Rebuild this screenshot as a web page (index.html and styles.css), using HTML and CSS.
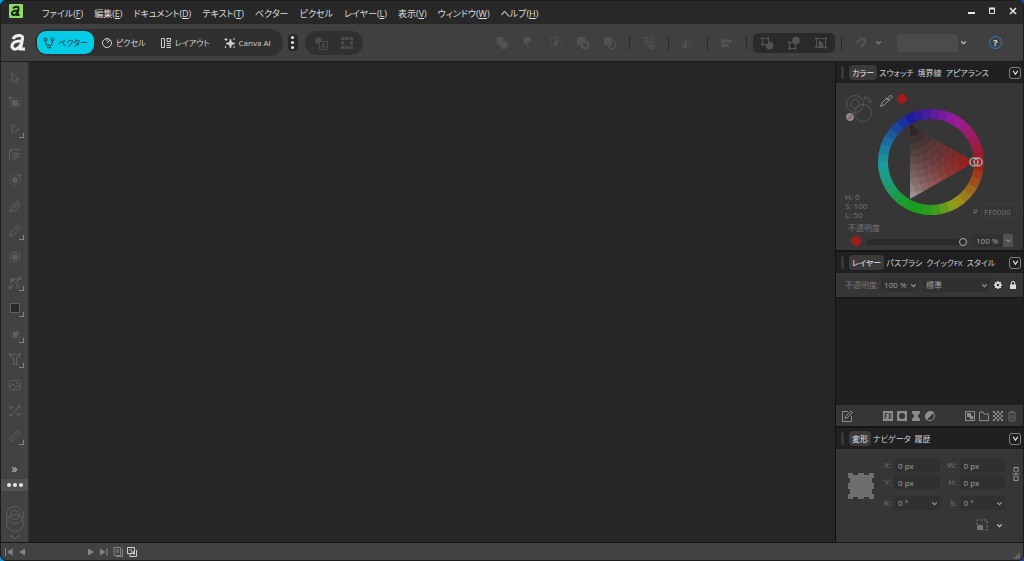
FILE: index.html
```html
<!DOCTYPE html>
<html lang="ja">
<head>
    <meta charset="UTF-8">
    <meta name="viewport" content="width=device-width, initial-scale=1.0">
    <title>Affinity</title>
    <link rel="stylesheet" href="styles.css">
    <script defer src="script.js"></script>
</head>
<body>
<div class="window">
    <header class="titlebar">
        <svg class="app-icon" viewBox="0 0 14 14"><rect width="14" height="14" rx="1" fill="#8fd968"/><path d="M4 4.500C6 2 10.500 2 9.500 5L8.300 11H10.500M9 6.500C4 6.500 2.500 8 3 10C4 12 7 11 8.600 8" fill="none" stroke="#18240f" stroke-width="2"/></svg>
        <nav class="menu">
            <button>ファイル(<u>F</u>)</button>
            <button>編集(<u>E</u>)</button>
            <button>ドキュメント(<u>D</u>)</button>
            <button>テキスト(<u>T</u>)</button>
            <button>ベクター</button>
            <button>ピクセル</button>
            <button>レイヤー(<u>L</u>)</button>
            <button>表示(<u>V</u>)</button>
            <button>ウィンドウ(<u>W</u>)</button>
            <button>ヘルプ(<u>H</u>)</button>
        </nav>
        <div class="window-buttons">
            <button aria-label="最小化"><svg viewBox="0 0 8 8"><path d="M1 6H8" stroke-width="2"/></svg></button>
            <button aria-label="最大化"><svg viewBox="0 0 8 8"><path d="M1 1.500H7" stroke-width="2"/><path d="M1.500 2V6.500H6.500V2"/></svg></button>
            <button aria-label="閉じる"><svg viewBox="0 0 8 8"><path d="M1 1L7 7M7 1L1 7" stroke-width="1.500"/></svg></button>
        </div>
    </header>

    <div class="toolbar">
        <svg class="brand" viewBox="0 0 16 18"><path d="M3 5C5 0.500 14 0 12.500 5L10.500 15H15M12 7C5 6.500 1.500 9 2 13C4 17 9 15 11 10" fill="none" stroke="#eee" stroke-width="3"/></svg>
        <div class="personas">
            <button class="persona persona-active">
                <svg class="icon12" viewBox="0 0 12 12"><circle cx="2.500" cy="2.500" r="1.500"/><circle cx="9.500" cy="2.500" r="1.500"/><circle cx="6" cy="9.500" r="1.500"/><path d="M2.500 4C2.500 7 3.500 8 4.800 8.500M9.500 4C9.500 7 8.500 8 7.200 8.500"/></svg>ベクター</button>
            <button class="persona">
                <svg class="icon12" viewBox="0 0 12 12"><circle cx="6" cy="6" r="4.500"/><path d="M6 6L9 3M6 1.500V4"/></svg>ピクセル</button>
            <button class="persona">
                <svg class="icon12" viewBox="0 0 12 12"><path d="M1.500 1.500H4.500V10.500H1.500ZM7 1.500H10.500V4.500H7ZM6.500 6.500H11M6.500 8.500H11M6.500 10.500H11"/></svg>レイアウト</button>
            <button class="persona">
                <svg class="icon12" viewBox="0 0 12 12"><path d="M6.500 2L7.500 5.500L11 6.500L7.500 7.500L6.500 11L5.500 7.500L2 6.500L5.500 5.500Z" fill="currentColor"/><path d="M2 1V4M0.500 2.500H3.500M10 1V3M1.500 9V11M9 10H11"/></svg>Canva AI</button>
        </div>
        <button class="dots-v" aria-label="その他"><i></i><i></i><i></i></button>
        <div class="quick">
            <button aria-label="テキスト変換"><svg class="icon14" viewBox="0 0 14 14"><circle cx="4.500" cy="4.500" r="3.500" fill="currentColor" stroke="none"/><rect x="5.500" y="5.500" width="8" height="8" fill="#303030"/><path d="M7.500 12L9.500 7L11.500 12M8 10.500H11"/></svg></button>
            <button aria-label="グリッド"><svg class="icon14" viewBox="0 0 14 14"><path d="M1 2.500H13M1 11.500H13" stroke-width="3" stroke-dasharray="3.500 .75"/><path d="M2.700 5.200V8.800M11.300 5.200V8.800" stroke-width="3"/></svg></button>
        </div>
        <div class="ops">
            <div class="booleans">
                <button aria-label="追加"><svg class="icon14" viewBox="0 0 14 14"><path d="M2 1.500H8V5A4 4 0 1 1 5 8H2Z" fill="currentColor"/></svg></button>
                <button aria-label="減算"><svg class="icon14" viewBox="0 0 14 14"><path d="M2 1.500H8V4.500L5 8H2Z" fill="currentColor"/><circle cx="9" cy="9" r="3.800" stroke-dasharray="1.500 1"/></svg></button>
                <button aria-label="交差"><svg class="icon14" viewBox="0 0 14 14"><path d="M5 8A4 4 0 0 1 8 4.500V8Z" fill="currentColor"/><rect x="1.500" y="1.500" width="7" height="7" stroke-dasharray="1.500 1"/><circle cx="9" cy="9" r="3.800" stroke-dasharray="1.500 1"/></svg></button>
                <button aria-label="型抜き"><svg class="icon14" viewBox="0 0 14 14"><path d="M1.500 1.500H8.500V4L4 8.500H1.500Z" fill="currentColor"/><circle cx="9" cy="9" r="3.200" stroke-width="2.500"/></svg></button>
                <button aria-label="分割"><svg class="icon14" viewBox="0 0 14 14"><path d="M1.500 1.500H8.500V4L4 8.500H1.500Z" fill="currentColor"/><circle cx="9" cy="9" r="3.800" stroke-width="1.500"/><path d="M6 8L8 6V10Z" fill="currentColor"/></svg></button>
            </div>
            <span class="sep"></span>
            <button aria-label="ブレンド"><svg class="icon14" viewBox="0 0 14 14"><rect x="1.500" y="1.500" width="4" height="4"/><circle cx="9" cy="3.500" r="2"/><path d="M4 7L7 10M6 6L10 9M10 5L13 8M5 10H8V12"/><rect x="9.500" y="9.500" width="3" height="3"/></svg></button>
            <span class="sep"></span>
            <button aria-label="反転"><svg class="icon14" viewBox="0 0 14 14"><path d="M6 2V12H1Z" fill="currentColor" stroke="none"/><path d="M8.500 3V12H13Z" stroke-dasharray="1.500 1"/></svg></button>
            <span class="sep"></span>
            <button aria-label="整列"><svg class="icon14" viewBox="0 0 14 14"><path d="M2 2V12"/><path d="M2 5H12M2 9.500H9" stroke-width="3"/></svg></button>
            <span class="sep"></span>
            <div class="insert">
                <button aria-label="背面に挿入"><svg class="icon14" viewBox="0 0 14 14"><circle cx="9.500" cy="9.500" r="3.500" fill="currentColor"/><rect x="2.500" y="2.500" width="6" height="6" fill="#292929"/><path d="M1 2.500H3M8 1V3.500M1 8.500H4" stroke-width="2"/></svg></button>
                <button aria-label="前面に挿入"><svg class="icon14" viewBox="0 0 14 14"><rect x="2.500" y="6.500" width="6" height="6"/><circle cx="9" cy="4.500" r="3.500" fill="currentColor"/><path d="M1 6.500H3M1 12.500H4M7 12.500H9.500" stroke-width="2"/></svg></button>
                <button aria-label="内側に挿入"><svg class="icon14" viewBox="0 0 14 14"><rect x="2.500" y="2.500" width="9" height="9"/><path d="M5 10.500V5.500A4 4 0 0 1 9 10.500Z" fill="currentColor"/><path d="M1 2.500H3M11 2.500H13M1 11.500H3M11 11.500H13" stroke-width="2"/></svg></button>
            </div>
            <span class="sep"></span>
            <button class="snap" aria-label="スナップ"><svg class="icon14" viewBox="0 0 14 14"><path d="M2 7L6 3.500C10 1 13 5 10 8L7 11" stroke-width="2.500"/></svg></button>
            <svg class="chev" viewBox="0 0 6 6"><path d="M1 2L3 4L5 2"/></svg>
            <select class="preset" aria-label="プリセット"><option></option></select>
            <svg class="chev chev-light" viewBox="0 0 6 6"><path d="M1 2L3 4L5 2"/></svg>
            <button class="help" aria-label="ヘルプ">?</button>
        </div>
    </div>

    <main class="workspace">
        <aside class="tools">
            <div class="tool-list">
                <button aria-label="移動"><svg viewBox="0 0 14 14"><path d="M4 1.500V11L6.500 9L8 12.500L9.500 11.500L8.500 8.500H11Z"/></svg></button>
                <button aria-label="アートボード"><svg viewBox="0 0 14 14"><rect x="4.500" y="4.500" width="5" height="5" fill="currentColor"/><rect x="2" y="2" width="10" height="10" rx="2" stroke-dasharray="2.500 1.500"/><path d="M0 2H4M2 0V4"/></svg></button>
                <button class="more-tools" aria-label="ノード"><svg viewBox="0 0 14 14"><path d="M4 2V11.500L11 7.500Z"/></svg></button>
                <button aria-label="コーナー"><svg viewBox="0 0 14 14"><path d="M1.500 13V1.500H13M2 2L6 6M6 5V12L8 9.500M6 5L12 6L9 9"/><circle cx="9" cy="8" r="1.500"/></svg></button>
                <button aria-label="輪郭"><svg viewBox="0 0 14 14"><circle cx="7" cy="7" r="5.500" stroke-dasharray="2 1.300"/><circle cx="7" cy="7" r="2.500" fill="currentColor"/><circle cx="12" cy="2.500" r="1" fill="currentColor"/></svg></button>
                <button aria-label="ペン"><svg viewBox="0 0 14 14"><path d="M1.500 12.500L3 6.500L8 4L11 7L8.500 11.500ZM2 12L6.500 8M8 4L9.500 1.500L12.500 4.500L11 7"/><circle cx="7" cy="7.500" r="1"/></svg></button>
                <button class="more-tools" aria-label="鉛筆"><svg viewBox="0 0 14 14"><path d="M1.500 12.500L2.500 9L10 1.500L12.500 4L5 11.500ZM8 3.500L10.500 6M2.500 9L5 11.500"/></svg></button>
                <button aria-label="ナイフ"><svg viewBox="0 0 14 14"><circle cx="7" cy="7" r="2.500" fill="currentColor"/><path d="M1 13L13 1M2 10V5L5 2.500H9M12 4V9L9 11.500H5"/></svg></button>
                <button class="more-tools" aria-label="塗りつぶし"><svg viewBox="0 0 14 14"><path d="M2 12L12 2"/><circle cx="2.500" cy="11.500" r="1.500" fill="currentColor"/><circle cx="11.500" cy="2.500" r="1.500" fill="currentColor"/><circle cx="4" cy="4" r="1.800" fill="currentColor"/><circle cx="8" cy="3" r="1"/><circle cx="10" cy="9" r="1.500"/><path d="M2 7H4M8 12H11"/></svg></button>
                <button class="more-tools" aria-label="長方形"><svg viewBox="0 0 14 14"><rect x="2.500" y="2.500" width="9" height="9" fill="#292929"/></svg></button>
                <button class="more-tools" aria-label="シェイプビルダー"><svg viewBox="0 0 14 14"><path d="M5 5H10V9L8 10H5Z" fill="currentColor"/><circle cx="5.500" cy="5.500" r="4" stroke-dasharray="1.500 2"/><circle cx="9" cy="9" r="4" stroke-dasharray="1.500 2"/></svg></button>
                <button class="more-tools" aria-label="テキスト"><svg viewBox="0 0 14 14"><path d="M2.500 2.500H11.500V5H8.500V11.500H5.500V5H2.500Z"/><path d="M1 2.500H3M11 2.500H13M4.500 12H6.500M8 12H10" stroke-width="2"/></svg></button>
                <button aria-label="画像"><svg viewBox="0 0 14 14"><rect x="1.500" y="2.500" width="11" height="9" rx="1"/><path d="M2 9L5 6L8 9L10 7L12 9"/><circle cx="9" cy="5" r=".6"/></svg></button>
                <button aria-label="切り抜き"><svg viewBox="0 0 14 14"><path d="M2 12L12 2M3 1V6M1 3.500H6M8 10.500H13M11 8V13"/><circle cx="2.500" cy="11.500" r="1"/><circle cx="11.500" cy="2.500" r="1"/></svg></button>
                <button class="more-tools" aria-label="計測"><svg viewBox="0 0 14 14"><path d="M1.500 10L10 1.500L12.500 4L4 12.500ZM4 8L5 9M6 6L7 7M8 4L9 5"/></svg></button>
            </div>
            <button class="expand" aria-label="展開">»</button>
            <button class="dots-h" aria-label="ツールを編集"><i></i><i></i><i></i></button>
            <svg class="fill-stroke" viewBox="0 0 20 36"><circle cx="10" cy="10" r="8.500"/><circle cx="10" cy="10" r="4.500"/><circle cx="10" cy="18" r="8.500"/><path d="M6 31C7 34 13 34 14 31M5 32L6 30L8 32M12 32L14 30L15 32"/></svg>
        </aside>

        <section class="canvas"></section>

        <aside class="panels">
            <section class="panel">
                <div class="tabs">
                    <span class="grip"></span>
                    <button class="tab tab-active">カラー</button><button class="tab">スウォッチ</button><button class="tab">境界線</button><button class="tab">アピアランス</button>
                    <button class="tab-menu" aria-label="パネルメニュー"><svg viewBox="0 0 6 6"><path d="M1 1.500L3 4.500L5 1.500"/></svg></button>
                </div>
                <div class="color-panel">
                    <div class="color-main">
                        <div class="color-side">
                            <div class="color-picks">
                                <svg class="wells" viewBox="0 0 30 30"><circle cx="10" cy="10" r="8.500"/><circle cx="10" cy="10" r="4.500"/><circle cx="18" cy="19" r="8.500"/><path d="M19 4C23 3 25 5 25 9M21 2L19 4L21 6M23 7L25 9L27 7"/><circle cx="5" cy="23" r="4" fill="#8d8787" stroke="none"/><path d="M2.500 25.500L7.500 20.500" stroke="#a83232"/></svg>
                                <svg class="dropper" viewBox="0 0 14 14"><path d="M1.500 12.500L3 9L8 4L10 6L5 11ZM6.500 3.500L10.500 7.500M8.500 5L11 1.500C13 1 13.500 3 12.500 4L10 6.500" /></svg>
                                <span class="red-dot"></span>
                            </div>
                            <div class="hsl">H: 0<br>S: 100<br>L: 50</div>
                        </div>
                        <canvas class="wheel" id="wheel" width="108" height="108"></canvas>
                        <label class="hex"># <input type="text" value="FF0000"></label>
                    </div>
                    <label class="opacity-label" for="opacity">不透明度</label>
                    <div class="opacity-row">
                        <span class="red-dot"></span>
                        <input type="range" id="opacity" min="0" max="100" value="100">
                        <input class="percent" type="text" value="100 %" aria-label="不透明度 %">
                        <button class="drop" aria-label="開く"><svg class="chev" viewBox="0 0 6 6"><path d="M1 2L3 4L5 2"/></svg></button>
                    </div>
                </div>
            </section>

            <section class="panel">
                <div class="tabs">
                    <span class="grip"></span>
                    <button class="tab tab-active">レイヤー</button><button class="tab">パスブラシ</button><button class="tab">クイックFX</button><button class="tab">スタイル</button>
                    <button class="tab-menu" aria-label="パネルメニュー"><svg viewBox="0 0 6 6"><path d="M1 1.500L3 4.500L5 1.500"/></svg></button>
                </div>
                <div class="layer-options">
                    <label for="layer-opacity">不透明度:</label>
                    <select id="layer-opacity" class="select-opacity"><option>100 %</option></select>
                    <select class="select-blend" aria-label="ブレンドモード"><option>標準</option></select>
                    <button aria-label="設定"><svg viewBox="0 0 10 10"><circle cx="5" cy="5" r="2.200" stroke="#ddd" stroke-width="1.800"/><path d="M5 1V2.500M5 7.500V9M1 5H2.500M7.500 5H9M2.200 2.200L3 3M7 7L7.800 7.800M7.800 2.200L7 3M2.200 7.800L3 7" stroke="#ddd" stroke-width="1.500"/></svg></button>
                    <button aria-label="ロック"><svg viewBox="0 0 10 10"><rect x="2" y="4.500" width="6" height="4.500" fill="#ddd" stroke="none"/><path d="M3.300 5V3A1.700 1.700 0 0 1 6.700 3V5" stroke="#ddd"/></svg></button>
                </div>
                <div class="layer-list"></div>
                <div class="layer-actions">
                    <button aria-label="編集"><svg viewBox="0 0 12 12"><path d="M7 1.500H1.500V11.500H10.500V6M4 8.500L5 6L10 1L11.500 2.500L6.500 7.500Z"/></svg></button>
                    <div class="action-group">
                        <button aria-label="エフェクト"><svg viewBox="0 0 12 12"><rect x="1" y="1" width="10" height="10" fill="currentColor" stroke="none"/><path d="M3 9V3.500H5.500M3 6H5M6.500 3L9.500 9M9.500 3L6.500 9" stroke="#353535"/></svg></button>
                        <button aria-label="マスク"><svg viewBox="0 0 12 12"><path d="M1 1H11V11H1ZM6 3A3 3 0 0 0 6 9A3 3 0 0 0 6 3Z" fill="currentColor" fill-rule="evenodd" stroke="none"/></svg></button>
                        <button aria-label="ライブフィルター"><svg viewBox="0 0 12 12"><path d="M2 1H10V3L7.500 6L10 9V11H2V9L4.500 6L2 3Z" fill="currentColor" stroke="none"/></svg></button>
                        <button aria-label="調整"><svg viewBox="0 0 12 12"><circle cx="6" cy="6" r="4.500"/><path d="M9.500 2.500A5 5 0 0 0 2.500 9.500Z" fill="currentColor"/></svg></button>
                    </div>
                    <div class="action-group">
                        <button aria-label="レイヤー"><svg viewBox="0 0 12 12"><rect x="1.500" y="1.500" width="9" height="9"/><rect x="3" y="3" width="4" height="4" fill="currentColor" stroke="none"/><circle cx="7.500" cy="7.500" r="2" fill="currentColor" stroke="none"/></svg></button>
                        <button aria-label="グループ"><svg viewBox="0 0 12 12"><path d="M1.500 10.500V2H5L6 4H10.500V10.500Z"/></svg></button>
                        <button aria-label="ピクセル"><svg viewBox="0 0 12 12"><path d="M1 2H11M1 6H11M1 10H11" stroke-width="2" stroke-dasharray="2 2"/><path d="M3 4H11M3 8H11" stroke-width="2" stroke-dasharray="2 2"/></svg></button>
                        <button class="dim" aria-label="削除"><svg viewBox="0 0 12 12"><path d="M2 3H10M4.500 3V1.500H7.500V3M3 3.500V11H9V3.500M5 5V9.500M7 5V9.500"/></svg></button>
                    </div>
                </div>
            </section>

            <section class="panel panel-last">
                <div class="tabs">
                    <span class="grip"></span>
                    <button class="tab tab-active">変形</button><button class="tab">ナビゲータ</button><button class="tab">履歴</button>
                    <button class="tab-menu" aria-label="パネルメニュー"><svg viewBox="0 0 6 6"><path d="M1 1.500L3 4.500L5 1.500"/></svg></button>
                </div>
                <div class="transform">
                    <svg class="anchor" viewBox="0 0 26 26"><path d="M0 0H5V2H10V0H16V2H21V0H26V5H24V10H26V16H24V21H26V26H21V24H16V26H10V24H5V26H0V21H2V16H0V10H2V5H0Z" fill="#6e6e6e"/></svg>
                    <div class="fields">
                        <label for="fx">X:</label><input id="fx" type="text" value="0 px">
                        <label for="fw">W:</label><input id="fw" type="text" value="0 px">
                        <label for="fy">Y:</label><input id="fy" type="text" value="0 px">
                        <label for="fh">H:</label><input id="fh" type="text" value="0 px">
                        <label class="row-gap" for="fr">R:</label><select class="row-gap" id="fr"><option>0 °</option></select>
                        <label class="row-gap" for="fs">S:</label><select class="row-gap" id="fs"><option>0 °</option></select>
                        <div class="scale">
                            <svg viewBox="0 0 12 12"><path d="M1 6V1H11V11H7" stroke-dasharray="2.500 1.500"/><rect x="1" y="6" width="6" height="5" rx="1" fill="currentColor" stroke="none"/></svg>
                            <svg class="chev chev-light" viewBox="0 0 6 6"><path d="M1 2L3 4L5 2"/></svg>
                        </div>
                    </div>
                    <button class="link" aria-label="縦横比を固定"><svg viewBox="0 0 8 16"><path d="M2 6V1.500H6V6M2 10V14.500H6V10M4 5V7M4 9V11M0.500 8H7.500"/></svg></button>
                </div>
            </section>
        </aside>
    </main>

    <footer class="statusbar">
        <button aria-label="最初"><svg viewBox="0 0 10 10"><path d="M1.500 1V9"/><path d="M8.500 1.500V8.500L3 5Z" fill="currentColor" stroke="none"/></svg></button>
        <button aria-label="前へ"><svg viewBox="0 0 10 10"><path d="M8 1.500V8.500L2 5Z" fill="currentColor" stroke="none"/></svg></button>
        <button class="next" aria-label="次へ"><svg viewBox="0 0 10 10"><path d="M2 1.500V8.500L8 5Z" fill="currentColor" stroke="none"/></svg></button>
        <button aria-label="最後"><svg viewBox="0 0 10 10"><path d="M1 1.500V8.500L6.500 5Z" fill="currentColor" stroke="none"/><path d="M8 1V9"/></svg></button>
        <button class="pages" aria-label="ページ"><svg viewBox="0 0 10 10"><path d="M1 .5H7.500V8.500H1ZM9.500 2V9.500H3M2.500 3H6M2.500 5H6"/></svg></button>
        <button class="pages lit" aria-label="見開き"><svg viewBox="0 0 10 10"><path d="M.5 .5H7.500V6.500H.5ZM9.500 3V9.500H3V7M2.500 3H5M4 5H7V8"/></svg></button>
        <svg class="resize" viewBox="0 0 6 6"><path d="M5 0V6M3 2V6M1 4V6"/></svg>
    </footer>
</div>
</body>
</html>
```
FILE: styles.css
```css
* {
    box-sizing: border-box;
}

html {
    background: linear-gradient(90deg, #0a9fe0, #1c46a8);
}

body {
    margin: 0;
    color: #d0d0d0;
    font-family: "Open Sans", "Noto Sans CJK JP", sans-serif;
    font-size: 8px;
    line-height: 12px;
    font-feature-settings: "palt";
}

button,
input,
select {
    margin: 0;
    padding: 0;
    border: none;
    background: none;
    color: inherit;
    font: inherit;
    font-feature-settings: inherit;
    appearance: none;
}

button {
    display: flex;
    align-items: center;
    justify-content: center;
}

svg {
    display: block;
    flex: none;
    fill: none;
    stroke: currentColor;
}

i {
    display: block;
    border-radius: 50%;
    background: #e4e4e4;
}

.window {
    display: flex;
    flex-direction: column;
    height: 100vh;
    border: 1px solid #1c1c1c;
    border-radius: 6px;
    background: #262626;
    overflow: hidden;
}

/* Title bar */
.titlebar {
    display: flex;
    align-items: center;
    height: 23px;
    padding: 0 6px 0 8px;
    background: #282828;
}

.app-icon {
    width: 14px;
    height: 14px;
    margin-bottom: 4px;
    stroke: none;
}

.menu {
    display: flex;
    gap: 11px;
    margin: 2px 0 0 19px;
    color: #dcdcdc;
    font-size: 9px;
}

.menu button {
    white-space: nowrap;
}

.window-buttons {
    display: flex;
    gap: 13px;
    margin: 0 0 4px auto;
    color: #e8e8e8;
}

.window-buttons svg {
    width: 8px;
    height: 8px;
}

/* Toolbar */
.toolbar {
    display: flex;
    align-items: center;
    height: 37px;
    padding: 0 21px 0 9px;
    background: #404040;
}

.brand {
    width: 16px;
    height: 18px;
}

.personas {
    display: flex;
    align-items: center;
    height: 27px;
    margin-left: 9px;
    padding: 0 5px 0 2px;
    border-radius: 13px;
    background: #303030;
}

.persona {
    gap: 3px;
    height: 23px;
    padding: 0 7px;
    border-radius: 9px;
    white-space: nowrap;
}

.persona-active {
    padding: 0 6px;
    background: #06cbe6;
    color: #12363c;
}

.icon12 {
    width: 12px;
    height: 12px;
}

.icon14 {
    width: 14px;
    height: 14px;
}

.dots-v {
    flex-direction: column;
    gap: 2px;
    width: 10px;
    height: 17px;
    margin-left: 5px;
    border-radius: 4px;
    background: #282828;
}

.dots-v i {
    width: 3px;
    height: 3px;
}

.quick {
    display: flex;
    align-items: center;
    gap: 12px;
    height: 24px;
    margin-left: 7px;
    padding: 0 9px;
    border-radius: 12px;
    background: #303030;
    color: #4b4b4b;
}

.ops {
    display: flex;
    align-items: center;
    gap: 12px;
    margin-left: auto;
    color: #525252;
}

.booleans {
    display: flex;
    gap: 13px;
}

.sep {
    width: 1px;
    height: 14px;
    background: #292929;
}

.insert {
    display: flex;
    align-items: center;
    gap: 13px;
    height: 20px;
    margin: 0 -6px;
    padding: 0 7px;
    border-radius: 5px;
    background: #2a2a2a;
}

.chev {
    width: 7px;
    height: 7px;
    color: #858585;
}

.chev-light {
    color: #ccc;
}

.snap {
    margin-right: -5px;
}

.preset {
    width: 61px;
    height: 18px;
    margin: 0 -10px 0 3px;
    border-radius: 3px;
}

.help {
    width: 13px;
    height: 13px;
    margin-left: 10px;
    border: 1px solid #287fc9;
    border-radius: 50%;
    color: #e0e0e0;
    font-size: 9px;
    font-weight: bold;
}

/* Workspace */
.workspace {
    display: flex;
    flex: 1;
    min-height: 0;
    border-top: 1px solid #1d1d1d;
    border-bottom: 1px solid #171717;
}

.tools {
    display: flex;
    flex-direction: column;
    width: 28px;
    padding-top: 3px;
    border-right: 1px solid #303030;
    background: #424242;
    color: #5d5d5d;
}

.tool-list {
    display: flex;
    flex: 1;
    flex-direction: column;
}

.tool-list button {
    position: relative;
    flex: 1;
}

.tool-list svg {
    width: 14px;
    height: 14px;
}

.more-tools::after {
    content: "";
    position: absolute;
    right: 4px;
    bottom: 4px;
    width: 4px;
    height: 4px;
    border-right: 1px solid #858585;
    border-bottom: 1px solid #858585;
}

.expand {
    height: 20px;
    margin-top: 10px;
    color: #d0d0d0;
    font-size: 12px;
}

.dots-h {
    gap: 2px;
    height: 12px;
    background: #505050;
}

.dots-h i {
    width: 4px;
    height: 4px;
}

.fill-stroke {
    width: 20px;
    height: 36px;
    margin: 14px auto 1px;
}

.canvas {
    flex: 1;
    background: #262626;
}

/* Panels */
.panels {
    display: flex;
    flex-direction: column;
    width: 188px;
    border-left: 1px solid #111;
    background: #363636;
}

.panel {
    border-bottom: 2px solid #151515;
}

.panel-last {
    flex: 1;
    border-bottom: none;
}

.tabs {
    display: flex;
    align-items: center;
    height: 21px;
    padding: 0 2px 0 5px;
    background: #202020;
}

.grip {
    width: 3px;
    height: 13px;
    margin-right: 5px;
    border-radius: 2px;
    background: #383838;
}

.tab {
    height: 15px;
    padding: 0 2px;
    border-radius: 4px;
    white-space: nowrap;
}

.tab-active {
    padding: 0 3px;
    background: #3a3a3a;
    color: #e8e8e8;
}

.tab-menu {
    width: 12px;
    height: 12px;
    margin-left: auto;
    border: 1px solid #808080;
    border-radius: 3px;
    color: #eee;
}

.tab-menu svg {
    width: 7px;
    height: 7px;
}

.color-panel {
    height: 167px;
    padding: 11px 6px 0 9px;
    color: #757575;
}

.color-main {
    display: flex;
    position: relative;
    height: 128px;
}

.color-side {
    display: flex;
    flex-direction: column;
    justify-content: space-between;
    width: 32px;
    padding-bottom: 3px;
}

.color-picks {
    display: flex;
    gap: 4px;
}

.wells {
    width: 30px;
    height: 30px;
    color: #555;
}

.dropper {
    width: 14px;
    height: 14px;
    color: #909090;
}

.red-dot {
    flex: none;
    width: 10px;
    height: 10px;
    border-radius: 50%;
    background: #a01c1c;
}

.hsl {
    line-height: 9px;
}

.wheel {
    width: 108px;
    height: 108px;
    margin-top: 14px;
}

/* Hex code sits over the corner of the wheel */
.hex {
    display: flex;
    position: absolute;
    right: 0;
    bottom: 4px;
    align-items: center;
    gap: 3px;
}

.hex input {
    width: 36px;
    height: 14px;
    padding-left: 2px;
    border: 1px solid #3d3d3d;
    border-radius: 2px;
}

.opacity-label {
    display: block;
    margin-left: 3px;
}

.opacity-row {
    display: flex;
    align-items: center;
    height: 13px;
    padding: 0 4px 0 6px;
}

.opacity-row input[type="range"] {
    flex: 1;
    min-width: 0;
    height: 10px;
    margin: 2px 5px 0 6px;
}

input[type="range"]::-webkit-slider-runnable-track {
    height: 6px;
    border-radius: 3px;
    background: #2a2a2a;
}

input[type="range"]::-webkit-slider-thumb {
    width: 8px;
    height: 8px;
    margin-top: -1px;
    border: 1px solid #b0b0b0;
    border-radius: 50%;
    background: #2a2a2a;
    appearance: none;
}

.percent {
    width: 31px;
    height: 13px;
    padding-left: 4px;
    background: #303030;
    color: #a0a0a0;
}

.drop {
    width: 10px;
    height: 13px;
    background: #505050;
}

.layer-options {
    display: flex;
    align-items: center;
    height: 24px;
    padding: 0 5px 0 9px;
    color: #777;
}

select {
    background: #303030 url("data:image/svg+xml,%3Csvg xmlns='http://www.w3.org/2000/svg' viewBox='0 0 6 6'%3E%3Cpath d='M1 2L3 4L5 2' fill='none' stroke='%23999'/%3E%3C/svg%3E") no-repeat right 2px center / 7px 7px;
    color: #a0a0a0;
}

.preset {
    background: #4b4b4b;
}

.select-opacity {
    width: 38px;
    height: 14px;
    margin-left: 2px;
    padding-left: 3px;
}

.select-blend {
    flex: 1;
    min-width: 0;
    height: 14px;
    margin: 0 3px 0 4px;
    padding-left: 3px;
}

.layer-options svg {
    width: 10px;
    height: 10px;
}

.layer-options button + button {
    margin-left: 5px;
}

.layer-list {
    height: 108px;
    border-top: 1px solid #151515;
    background: #202020;
}

.layer-actions {
    display: flex;
    align-items: center;
    justify-content: space-between;
    height: 21px;
    padding: 0 5px;
    color: #8c8c8c;
}

.layer-actions svg {
    width: 12px;
    height: 12px;
}

.action-group {
    display: flex;
    gap: 2px;
}

.dim {
    color: #686868;
}

.transform {
    display: flex;
    padding: 9px 3px 0 12px;
    color: #777;
}

.anchor {
    width: 26px;
    height: 26px;
    margin-top: 15px;
    stroke: none;
}

.fields {
    display: grid;
    flex: 1;
    grid-template-columns: 12px 1fr 14px 1fr;
    gap: 3px 3px;
    align-items: center;
    margin: 0 7px 0 5px;
}

.fields label {
    text-align: right;
}

.fields input,
.fields select {
    min-width: 0;
    height: 14px;
    padding-left: 4px;
    background-color: #303030;
    color: #a0a0a0;
}

.fields .row-gap {
    margin-top: 4px;
}

.scale {
    display: flex;
    grid-column: 1 / -1;
    align-items: center;
    justify-content: flex-end;
    gap: 8px;
    margin-top: 6px;
    padding-right: 2px;
}

.scale svg:first-child {
    width: 12px;
    height: 12px;
}

.link {
    align-self: flex-start;
    margin-top: 8px;
}

.link svg {
    width: 8px;
    height: 16px;
    color: #999;
}

/* Status bar */
.statusbar {
    display: flex;
    align-items: center;
    height: 17px;
    padding-left: 3px;
    background: #424242;
    color: #858585;
}

.statusbar svg {
    width: 10px;
    height: 10px;
}

.statusbar button + button {
    margin-left: 3px;
}

.statusbar .next {
    margin-left: 59px;
}

.statusbar .pages {
    margin-left: 4px;
}

.lit {
    color: #d0d0d0;
}

.statusbar .resize {
    width: 6px;
    height: 6px;
    margin: 8px 3px 0 auto;
}
```
FILE: script.js
```js
const canvas = document.getElementById('wheel');
const ctx = canvas.getContext('2d');
const C = 54;

// hue stops for angles measured clockwise from the right-hand side
const hues = [0, 30, 60, 112, 125, 158, 182, 206, 234, 266, 299, 330, 360];

const SEGMENTS = 36;
for (let i = 0; i < SEGMENTS; i++) {
    const deg = (i + 0.5) * 360 / SEGMENTS;
    const k = Math.floor(deg / 30);
    const t = deg / 30 - k;
    const hue = hues[k] + (hues[k + 1] - hues[k]) * t;
    ctx.beginPath();
    ctx.arc(C, C, 48, (deg - 5.3) * Math.PI / 180, (deg + 5.3) * Math.PI / 180);
    ctx.lineWidth = 10;
    ctx.strokeStyle = `hsl(${hue}, 70%, 36%)`;
    ctx.stroke();
}

// shade triangle: black, white and pure hue corners
const black = [33, 17];
const white = [33, 91];
const red = [98, 54];

ctx.save();
ctx.beginPath();
ctx.moveTo(...black);
ctx.lineTo(...red);
ctx.lineTo(...white);
ctx.closePath();
ctx.clip();
for (let y = 17; y < 92; y++) {
    for (let x = 33; x < 98; x++) {
        const light = Math.min(1, Math.round(Math.hypot(x - black[0], y - black[1]) / 7) * 7 / 74);
        const pure = 1 - Math.min(1, Math.round(Math.hypot(x - red[0], y - red[1]) / 7) * 7 / 70);
        const r = 38 + 122 * light;
        const g = 28 + 122 * light * Math.pow(1 - pure, 1.5);
        ctx.fillStyle = `rgb(${r}, ${g}, ${g})`;
        ctx.fillRect(x, y, 1, 1);
    }
}
ctx.restore();

// picker handles
ctx.strokeStyle = '#aaa';
ctx.lineWidth = 1.5;
for (const x of [97, 101]) {
    ctx.beginPath();
    ctx.arc(x, C, 4, 0, Math.PI * 2);
    ctx.stroke();
}
```
